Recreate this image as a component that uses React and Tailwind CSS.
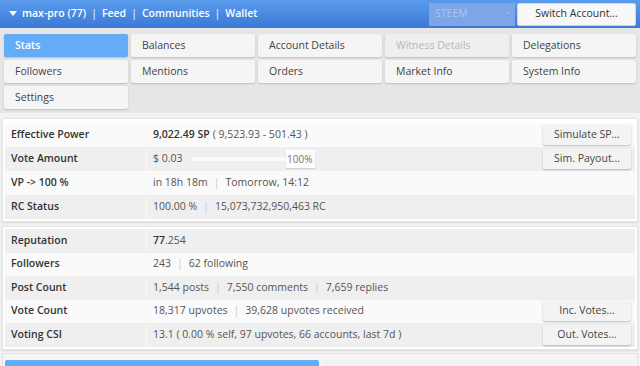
import React from "react";

const tabs = [
  { label: "Stats", active: true },
  { label: "Balances" },
  { label: "Account Details" },
  { label: "Witness Details", disabled: true },
  { label: "Delegations" },
  { label: "Followers" },
  { label: "Mentions" },
  { label: "Orders" },
  { label: "Market Info" },
  { label: "System Info" },
  { label: "Settings" },
];

function Sep({ light }) {
  return (
    <span className={light ? "mx-[5px] text-white/80" : "mx-[6px] text-[#c8c8c8]"}>|</span>
  );
}

function Btn({ children }) {
  return (
    <button className="mr-[4px] flex h-[20px] w-[88px] items-center justify-center rounded-[2px] bg-[#f3f3f3] text-[10.5px] text-[#444] shadow-[0_1px_2px_rgba(0,0,0,0.25)]">
      {children}
    </button>
  );
}

function Row({ label, gray, tall, children, action }) {
  return (
    <div
      className={`flex items-center ${tall ? "h-[24px]" : "h-[23.5px]"} ${
        gray ? "bg-[#efefef]" : "bg-[#fafafa]"
      }`}
    >
      <div className="flex h-full w-[142px] shrink-0 items-center border-r border-[#f7f7f7] pl-[6px] font-semibold text-[#333]">
        {label}
      </div>
      <div className="flex min-w-0 flex-1 items-center pl-[6px] text-[#555]">{children}</div>
      {action && <Btn>{action}</Btn>}
    </div>
  );
}

export default function App() {
  return (
    <div
      className="h-[366px] w-[640px] overflow-hidden bg-[#f2f2f2] text-[10.5px]"
      style={{ fontFamily: '"Open Sans", "Liberation Sans", sans-serif' }}
    >
      <header className="flex h-[28px] items-center bg-gradient-to-b from-[#5a9bec] to-[#3b79d6] pr-[4px] text-[10.5px] font-semibold text-white">
        <svg width="8" height="6" viewBox="0 0 8 6" className="ml-[9px] mr-[5px]">
          <path d="M0 0h8L4 5z" fill="white" />
        </svg>
        <span>max-pro (77)</span>
        <Sep light />
        <span>Feed</span>
        <Sep light />
        <span>Communities</span>
        <Sep light />
        <span>Wallet</span>
        <div className="ml-auto flex h-[23px] w-[86px] items-center justify-between bg-[#7ca6e8] px-[6px] text-[10.5px] font-normal text-[#aac6f0]">
          <span>STEEM</span>
          <span className="text-[7px]">•</span>
        </div>
        <button className="ml-[2px] h-[23px] w-[119px] rounded-[2px] border border-[#c9d7ea] bg-[#f7f7f7] text-[10.5px] font-normal text-[#333]">
          Switch Account...
        </button>
      </header>

      <nav className="grid grid-cols-5 gap-[3px] bg-[#e6e6e6] px-[4px] pb-[4px] pt-[6px]">
        {tabs.map((t) => (
          <div
            key={t.label}
            className={`flex h-[23px] items-center rounded-[2px] pl-[11px] shadow-[0_1px_2px_rgba(0,0,0,0.18)] ${
              t.active
                ? "bg-[#64acf7] font-semibold text-white"
                : t.disabled
                ? "bg-[#efefef] text-[#b8b8b8]"
                : "bg-[#f5f5f5] text-[#444]"
            }`}
          >
            {t.label}
          </div>
        ))}
      </nav>

      <div className="px-[2px] pt-[5px]">
        <section className="border border-[#e4e4e4] bg-white px-[2px] pb-[2px] pt-[4px] shadow-[0_1px_2px_rgba(0,0,0,0.1)]">
          <Row label="Effective Power" tall action="Simulate SP...">
            <span className="font-semibold text-[#333]">9,022.49 SP</span>
            <span className="ml-[3px]">( 9,523.93 - 501.43 )</span>
          </Row>
          <Row label="Vote Amount" tall gray action="Sim. Payout...">
            <span>$ 0.03</span>
            <div className="ml-[9px] h-[4px] w-[94px] rounded-full bg-[#fafafa]" />
            <div className="flex h-[18px] w-[29px] items-center justify-end bg-[#fcfcfc] pr-[2px] text-[10px] text-[#777] shadow-[0_1px_1px_rgba(0,0,0,0.12)]">
              100%
            </div>
          </Row>
          <Row label="VP -> 100 %" tall>
            <span>in 18h 18m</span>
            <Sep />
            <span>Tomorrow, 14:12</span>
          </Row>
          <Row label="RC Status" tall gray>
            <span>100.00 %</span>
            <Sep />
            <span>15,073,732,950,463 RC</span>
          </Row>
        </section>

        <section className="mt-[4px] border border-[#e4e4e4] bg-white px-[2px] pb-[2px] pt-[2px] shadow-[0_1px_2px_rgba(0,0,0,0.1)]">
          <Row label="Reputation" gray>
            <span>
              <span className="font-semibold text-[#333]">77</span>.254
            </span>
          </Row>
          <Row label="Followers">
            <span>243</span>
            <Sep />
            <span>62 following</span>
          </Row>
          <Row label="Post Count" gray>
            <span>1,544 posts</span>
            <Sep />
            <span>7,550 comments</span>
            <Sep />
            <span>7,659 replies</span>
          </Row>
          <Row label="Vote Count" action="Inc. Votes...">
            <span>18,317 upvotes</span>
            <Sep />
            <span>39,628 upvotes received</span>
          </Row>
          <Row label="Voting CSI" gray action="Out. Votes...">
            <span>13.1 ( 0.00 % self, 97 upvotes, 66 accounts, last 7d )</span>
          </Row>
        </section>

        <section className="mt-[3px] grid grid-cols-2 gap-[3px] border border-[#e4e4e4] bg-[#f5f5f5] px-[2px] pt-[6px]">
          <div className="h-[20px] rounded-[2px] bg-[#64acf7]" />
          <div className="h-[20px] rounded-[2px] bg-[#f2f2f2]" />
        </section>
      </div>
    </div>
  );
}
